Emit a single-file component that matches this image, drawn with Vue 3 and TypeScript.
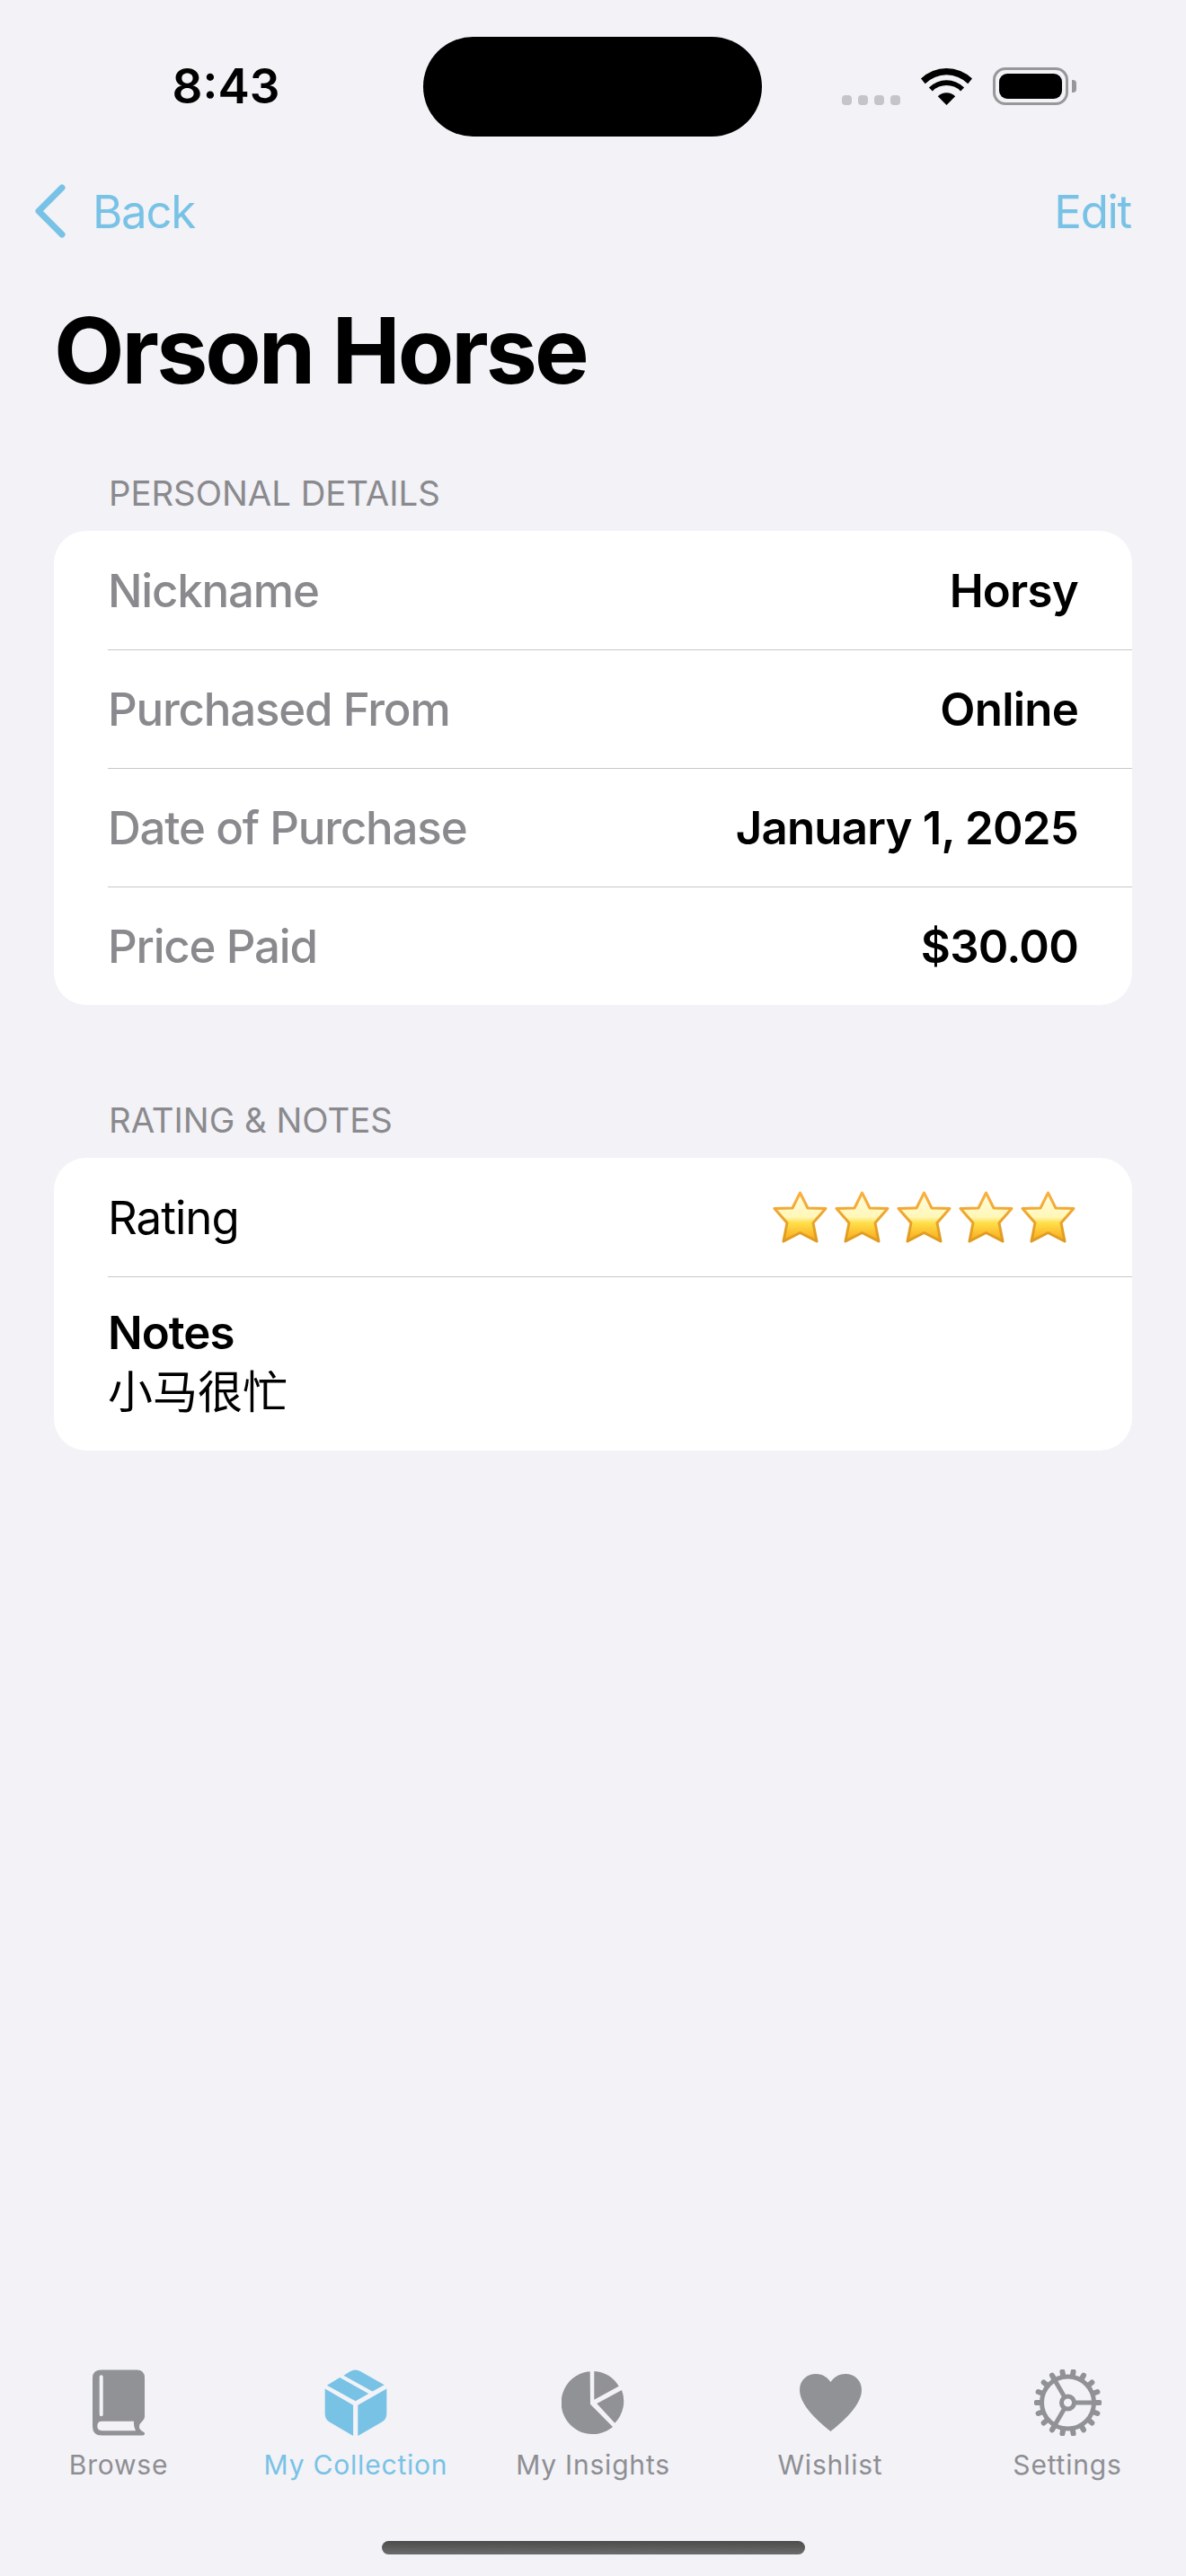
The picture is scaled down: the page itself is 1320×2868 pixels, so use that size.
<script setup lang="ts">
const details = [
  { label: 'Nickname', value: 'Horsy' },
  { label: 'Purchased From', value: 'Online' },
  { label: 'Date of Purchase', value: 'January 1, 2025' },
  { label: 'Price Paid', value: '$30.00' },
]

const tabs = ['Browse', 'My Collection', 'My Insights', 'Wishlist', 'Settings']

const stars = [0, 69, 138, 207, 276]

// gear teeth sit every 20deg, starting on the right hand side
const teeth = Array.from({ length: 18 }, (_, i) => {
  const a = (i * 20 * Math.PI) / 180
  return {
    x1: 37.5 + 30 * Math.cos(a),
    y1: 37 + 30 * Math.sin(a),
    x2: 37.5 + 35 * Math.cos(a),
    y2: 37 + 35 * Math.sin(a),
  }
})
</script>

<template>
  <div class="screen">
    <div class="status">
      <div class="time">8:43</div>
      <div class="island"></div>
      <div class="indicators">
        <div class="signal"><i></i><i></i><i></i><i></i></div>
        <svg class="wifi" width="57" height="42" viewBox="0 0 57 42">
          <path d="M0 12.5A41 41 0 0 1 57 12.5L52.3 18.2A33.7 33.7 0 0 0 4.7 18.2Z" />
          <path d="M8.9 22.4A27.7 27.7 0 0 1 48.1 22.4L44.1 26.4A22 22 0 0 0 12.9 26.4Z" />
          <path d="M18.8 32.3A13.7 13.7 0 0 1 38.2 32.3L28.5 42Z" />
        </svg>
        <div class="battery"><div class="battery-fill"></div></div>
        <div class="battery-nub"></div>
      </div>
    </div>

    <div class="nav">
      <div class="back">
        <svg width="38" height="60" viewBox="0 0 38 60">
          <path d="M32 4L6 30L32 56" fill="none" stroke="#78c2e6" stroke-width="7" stroke-linecap="round" stroke-linejoin="round" />
        </svg>
        <span>Back</span>
      </div>
      <span>Edit</span>
    </div>

    <h1 class="title">Orson Horse</h1>

    <div class="section-head">PERSONAL DETAILS</div>
    <div class="card">
      <div v-for="row in details" :key="row.label" class="row">
        <div class="row-inner">
          <span class="label">{{ row.label }}</span>
          <span class="value">{{ row.value }}</span>
        </div>
      </div>
    </div>

    <div class="section-head second">RATING &amp; NOTES</div>
    <div class="card">
      <div class="row">
        <div class="row-inner">
          <span>Rating</span>
          <svg class="stars" width="338" height="60" viewBox="0 0 338 60">
            <defs>
              <linearGradient id="starFill" x1="0" y1="0" x2="0" y2="1">
                <stop offset="0" stop-color="#fffbe0" />
                <stop offset="0.5" stop-color="#fff7b8" />
                <stop offset="0.62" stop-color="#ffdf4a" />
                <stop offset="1" stop-color="#f9a61a" />
              </linearGradient>
              <linearGradient id="starEdge" x1="0" y1="0" x2="0" y2="1">
                <stop offset="0" stop-color="#fbb03f" />
                <stop offset="1" stop-color="#dd9a1e" />
              </linearGradient>
            </defs>
            <path
              v-for="x in stars"
              :key="x"
              :transform="`translate(${x} 0)`"
              d="M30.5 3L39 20L59 20.5L45 36.5L49 57L30.5 47.5L12 57L16 36.5L2 20.5L22 20Z"
              fill="url(#starFill)"
              stroke="url(#starEdge)"
              stroke-width="3"
              stroke-linejoin="round"
            />
          </svg>
        </div>
      </div>
      <div class="row notes">
        <div class="notes-title">Notes</div>
        <div class="notes-text">小马很忙</div>
      </div>
    </div>

    <div class="tabbar">
      <div v-for="(tab, i) in tabs" :key="tab" class="tab" :class="{ active: i === 1 }">
        <svg v-if="i === 0" width="58" height="74" viewBox="0 0 58 73">
          <path
            fill-rule="evenodd"
            d="M10 0H49Q58 0 58 9V52Q58 55 55.5 57Q51.5 60.5 52 64Q52.5 67 56.5 69Q58.5 70 58 71.5Q57.5 73 55 73H10Q0 73 0 63V9Q0 0 10 0ZM9.7 5.7Q7.7 5.7 7.7 7.7V49.7Q7.7 51.7 9.7 51.7Q11.7 51.7 11.7 49.7V7.7Q11.7 5.7 9.7 5.7ZM10.5 57.3Q5.3 57.3 5.3 62.5Q5.3 67.7 10.5 67.7H48Q45.5 63 46 57.3Z"
          />
        </svg>
        <svg v-else-if="i === 1" width="70" height="74" viewBox="0 0 69.3 74.7">
          <path d="M0 21.7L31.7 40V74.7L5 59Q0 56 0 50Z" />
          <path d="M37 40L69.3 21.7V50Q69.3 56 64 59L37 74.7Z" />
          <path d="M2.3 18L16.7 9L49 27.3L34.3 35.7Z" />
          <path d="M21 6.7L28.3 2.3Q34.3 -1.2 40 2.3L66.7 17.3L53.3 24.7Z" />
        </svg>
        <svg v-else-if="i === 2" width="70" height="74" viewBox="0 -2 70 74">
          <path d="M31.7 0.2L32 36.7L57 62A35 35 0 1 1 31.7 0.2Z" />
          <path d="M36.3 0.1V31.7L63.7 16.7A35 35 0 0 0 36.3 0.1Z" />
          <path d="M39.3 36L67 21A35 35 0 0 1 59.3 57.7Z" />
        </svg>
        <svg v-else-if="i === 3" width="69" height="74" viewBox="0 -5 69 74">
          <path d="M34.5 64C30 60 0 38 0 18C0 7 8 0 18 0C26 0 31 4 34.5 9C38 4 43 0 51 0C61 0 69 7 69 18C69 38 39 60 34.5 64Z" />
        </svg>
        <svg v-else width="75" height="74" viewBox="0 0 75 74" class="gear">
          <circle cx="37.5" cy="37" r="29" />
          <line v-for="(t, n) in teeth" :key="n" class="tooth" :x1="t.x1" :y1="t.y1" :x2="t.x2" :y2="t.y2" />
          <circle cx="37.5" cy="37" r="7" />
          <line x1="44.5" y1="37" x2="66" y2="37" />
          <line x1="34" y1="43" x2="23" y2="62" />
          <line x1="34" y1="31" x2="23" y2="12" />
        </svg>
        <span>{{ tab }}</span>
      </div>
    </div>
    <div class="home-bar"></div>
  </div>
</template>

<style>
html,
body {
  margin: 0;
  background: #f2f2f7;
}
</style>

<style scoped>
.screen {
  box-sizing: border-box;
  width: 1320px;
  height: 2868px;
  display: flex;
  flex-direction: column;
  background: #f2f2f7;
  color: #000;
  font-family: Inter, "Noto Sans CJK SC", sans-serif;
  font-size: 51px;
  letter-spacing: -1px;
  overflow: hidden;
}

.status {
  display: flex;
  padding-top: 41px;
  height: 111px;
}

.time {
  width: 471px;
  padding-left: 32px;
  box-sizing: border-box;
  text-align: center;
  font-size: 53px;
  font-weight: 600;
  letter-spacing: 0;
  line-height: 111px;
}

.island {
  width: 377px;
  height: 111px;
  border-radius: 56px;
  background: #000;
}

.indicators {
  position: relative;
  display: flex;
  align-items: flex-start;
  padding: 34px 0 0 89px;
}

.signal {
  display: flex;
  gap: 7px;
  margin-top: 31px;
}

.signal i {
  width: 11px;
  height: 11px;
  border-radius: 4px;
  background: #c4c4c9;
}

.wifi {
  margin-left: 23px;
  fill: #000;
}

.battery {
  box-sizing: border-box;
  width: 84px;
  height: 42px;
  margin-left: 23px;
  padding: 4px;
  border: 3px solid #98989b;
  border-radius: 14px;
}

.battery-fill {
  width: 100%;
  height: 100%;
  border-radius: 9px;
  background: #000;
}

.battery-nub {
  width: 5px;
  height: 14px;
  margin: 14px 0 0 4px;
  border-radius: 0 4px 4px 0;
  background: #98989b;
}

.nav {
  display: flex;
  justify-content: space-between;
  align-items: center;
  height: 118px;
  margin-top: 24px;
  padding: 0 61px 0 37px;
  color: #78c2e6;
  letter-spacing: -1.3px;
}

.back {
  display: flex;
  align-items: center;
  gap: 28px;
}

.title {
  margin: 35px 0 0;
  padding-left: 60px;
  font-size: 102px;
  font-weight: 700;
  letter-spacing: -3px;
  line-height: 122px;
}

.section-head {
  margin-top: 76px;
  padding-left: 121px;
  color: #8a8a8e;
  font-size: 38.3px;
  letter-spacing: 0;
  line-height: 44px;
}

.section-head.second {
  margin-top: 106px;
}

.card {
  margin: 20px 60px 0;
  border-radius: 36px;
  background: #fff;
  overflow: hidden;
}

.row {
  box-sizing: border-box;
  padding-left: 60px;
}

.row-inner {
  display: flex;
  justify-content: space-between;
  align-items: center;
  box-sizing: border-box;
  height: 132px;
  padding-right: 60px;
}

.row + .row .row-inner {
  border-top: 1px solid #c8c8cc;
}

.label {
  color: #8a8a8e;
  font-weight: 500;
  letter-spacing: -1.2px;
}

.value {
  font-weight: 600;
  letter-spacing: -0.8px;
}

.stars {
  margin-right: 2px;
}

.notes {
  padding-bottom: 30px;
}

.notes-title {
  padding-top: 31px;
  border-top: 1px solid #c8c8cc;
  font-weight: 600;
  line-height: 62px;
}

.notes-text {
  font-size: 50px;
  letter-spacing: 0;
  line-height: 70px;
}

.tabbar {
  display: grid;
  grid-template-columns: repeat(5, 264px);
  margin-top: auto;
}

.tab {
  display: flex;
  flex-direction: column;
  align-items: center;
  color: #8e8e93;
  fill: #919296;
  font-size: 30px;
  line-height: 36px;
  letter-spacing: 0.8px;
}

.tab svg {
  height: 74px;
  margin-bottom: 14px;
}

.tab.active {
  color: #78c2e6;
  fill: #78c2e6;
}

.gear {
  fill: none;
  stroke: #919296;
  stroke-width: 5;
}

.gear .tooth {
  stroke-width: 6;
  stroke-linecap: round;
}

.home-bar {
  width: 471px;
  height: 15px;
  margin: 67px auto 24px;
  border-radius: 8px;
  background: linear-gradient(#4c4c4c, #6c6c6c);
}
</style>
